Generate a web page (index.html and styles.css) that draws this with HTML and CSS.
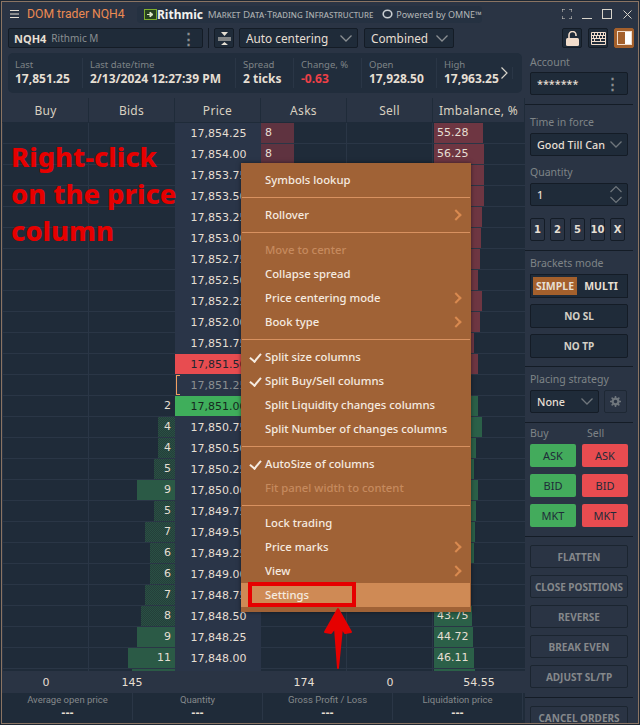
FILE: index.html
```html
<!DOCTYPE html>
<html lang="en">

<head>
    <meta charset="UTF-8">
    <title>DOM trader NQH4</title>
    <link rel="stylesheet" href="styles.css">
</head>

<body>
    <div class="window">
        <div class="titlebar">
            <svg class="burger" width="9" height="8" viewBox="0 0 9 8"><path d="M0 .5h9M0 4h9M0 7.5h9" stroke="#e6dfd3" stroke-width="1"/></svg>
            <span class="title">DOM trader NQH4</span>
            <div class="brand">
                <svg width="13" height="11" viewBox="0 0 13 11"><rect x=".5" y=".5" width="12" height="10" fill="#26401f" stroke="#7fae2e"/><path d="M3 5.5h5M6 3l3 2.5L6 8z" fill="#dfe8c8" stroke="#dfe8c8"/></svg>
                <span class="brand-name">Rithmic</span>
                <span class="brand-tag">Market Data·Trading Infrastructure</span>
                <svg class="omne-ring" width="11" height="10" viewBox="0 0 11 10"><ellipse cx="5.5" cy="5" rx="4.3" ry="3.8" fill="none" stroke="#c9ced2" stroke-width="1.6"/></svg>
                <span class="brand-omne">Powered by OMNE™</span>
            </div>
            <div class="win-buttons">
                <svg width="10" height="10" viewBox="0 0 10 10"><path d="M0 3V0h3M7 0h3v3M10 7v3H7M3 10H0V7" fill="none" stroke="#d8d4ca"/></svg>
                <svg width="10" height="10" viewBox="0 0 10 10"><path d="M0 9.5h10" stroke="#d8d4ca"/></svg>
                <svg width="10" height="10" viewBox="0 0 10 10"><rect x=".5" y=".5" width="9" height="9" fill="none" stroke="#d8d4ca"/></svg>
                <svg width="9" height="9" viewBox="0 0 9 9"><path d="M.5.5l8 8M8.5.5l-8 8" stroke="#d8d4ca"/></svg>
            </div>
        </div>

        <div class="toolbar">
            <div class="field symbol">
                <b>NQH4</b><span class="muted">Rithmic M</span>
                <span class="dots">⋮</span>
            </div>
            <span class="tool-sep"></span>
            <div class="field icon-btn">
                <svg width="13" height="13" viewBox="0 0 13 13"><path d="M0 6h13M0 8h13" stroke="#e6dfd3"/><path d="M3 0h7L6.500 4zM3 13h7L6.500 10z" fill="#e6dfd3"/></svg>
            </div>
            <div class="field select auto">Auto centering<svg class="caret" width="12" height="7" viewBox="0 0 12 7"><path d="M.5.500l5.500 5.500L11.500.500" fill="none" stroke="#8a8f92" stroke-width="1.300"/></svg></div>
            <div class="field select combined">Combined<svg class="caret" width="12" height="7" viewBox="0 0 12 7"><path d="M.5.500l5.500 5.500L11.500.500" fill="none" stroke="#8a8f92" stroke-width="1.300"/></svg></div>
            <div class="tool-right">
                <div class="field icon-btn">
                    <svg width="13" height="15" viewBox="0 0 13 15"><path d="M3 7V4a3.500 3.500 0 0 1 7 0v1" fill="none" stroke="#f1dccb" stroke-width="1.600"/><rect y="7" width="13" height="8" rx="1.500" fill="#f1dccb"/></svg>
                </div>
                <div class="field icon-btn">
                    <svg width="15" height="13" viewBox="0 0 15 13"><path d="M.5.500h14v12H.5zM.5 3.500h14M.5 6.500h14M.5 9.500h14M3.500.5v3M6.500.5v3M9.500.5v3M12.500.5v3M2.500 3.500v3M5.500 3.500v3M8.500 3.500v3M11.500 3.500v3M3.500 6.500v3M9.500 6.500v3" fill="none" stroke="#f1dccb"/></svg>
                </div>
                <div class="field icon-btn active">
                    <svg width="15" height="14" viewBox="0 0 15 14"><rect x=".5" y=".5" width="14" height="13" fill="#a4602c" stroke="#f1dccb"/><rect x="8" y="1" width="6" height="12" fill="#fff"/></svg>
                </div>
            </div>
        </div>

        <div class="main">
            <div class="left">
                <div class="stats">
                    <div class="stat s-last"><span>Last</span><b>17,851.25</b></div>
                    <div class="stat s-date"><span>Last date/time</span><b>2/13/2024 12:27:39 PM</b></div>
                    <div class="stat s-spread"><span>Spread</span><b>2 ticks</b></div>
                    <div class="stat s-change"><span>Change, %</span><b class="down">-0.63</b></div>
                    <div class="stat s-open"><span>Open</span><b>17,928.50</b></div>
                    <div class="stat s-high"><span>High</span><b>17,963.25</b></div>
                    <div class="stat-more">
                        <svg width="7" height="12" viewBox="0 0 7 12"><path d="M.5.500L6 6 .5 11.500" fill="none" stroke="#d8d4ca" stroke-width="1.200"/></svg>
                    </div>
                </div>

                <div class="head">
                    <div>Buy</div>
                    <div>Bids</div>
                    <div>Price</div>
                    <div>Asks</div>
                    <div>Sell</div>
                    <div>Imbalance, %</div>
                </div>

                <div class="rows">
                    <div class="row"><div class="cell"></div><div class="cell bids"></div><div class="cell price">17,854.25</div><div class="cell asks"><span class="bar ask" style="width:33px">8</span></div><div class="cell"></div><div class="cell imb"><span class="bar red" style="width:49px">55.28</span></div></div>
                    <div class="row"><div class="cell"></div><div class="cell bids"></div><div class="cell price">17,854.00</div><div class="cell asks"><span class="bar ask" style="width:33px">8</span></div><div class="cell"></div><div class="cell imb"><span class="bar red" style="width:50px">56.25</span></div></div>
                    <div class="row"><div class="cell"></div><div class="cell bids"></div><div class="cell price">17,853.75</div><div class="cell"></div><div class="cell"></div><div class="cell imb"><span class="bar red" style="width:50px"></span></div></div>
                    <div class="row"><div class="cell"></div><div class="cell bids"></div><div class="cell price">17,853.50</div><div class="cell"></div><div class="cell"></div><div class="cell imb"><span class="bar red" style="width:50px"></span></div></div>
                    <div class="row"><div class="cell"></div><div class="cell bids"></div><div class="cell price">17,853.25</div><div class="cell"></div><div class="cell"></div><div class="cell imb"><span class="bar red" style="width:48px"></span></div></div>
                    <div class="row"><div class="cell"></div><div class="cell bids"></div><div class="cell price">17,853.00</div><div class="cell"></div><div class="cell"></div><div class="cell imb"><span class="bar red" style="width:47px"></span></div></div>
                    <div class="row"><div class="cell"></div><div class="cell bids"></div><div class="cell price">17,852.75</div><div class="cell"></div><div class="cell"></div><div class="cell imb"><span class="bar red" style="width:46px"></span></div></div>
                    <div class="row"><div class="cell"></div><div class="cell bids"></div><div class="cell price">17,852.50</div><div class="cell"></div><div class="cell"></div><div class="cell imb"><span class="bar red" style="width:44px"></span></div></div>
                    <div class="row"><div class="cell"></div><div class="cell bids"></div><div class="cell price">17,852.25</div><div class="cell"></div><div class="cell"></div><div class="cell imb"><span class="bar red" style="width:48px"></span></div></div>
                    <div class="row"><div class="cell"></div><div class="cell bids"></div><div class="cell price">17,852.00</div><div class="cell"></div><div class="cell"></div><div class="cell imb"><span class="bar red" style="width:46px"></span></div></div>
                    <div class="row"><div class="cell"></div><div class="cell bids"></div><div class="cell price">17,851.75</div><div class="cell"></div><div class="cell"></div><div class="cell imb"><span class="bar red" style="width:40px"></span></div></div>
                    <div class="row"><div class="cell"></div><div class="cell bids"></div><div class="cell price best-ask">17,851.50</div><div class="cell"></div><div class="cell"></div><div class="cell imb"><span class="bar red" style="width:44px"></span></div></div>
                    <div class="row"><div class="cell"></div><div class="cell bids"></div><div class="cell price last">17,851.25</div><div class="cell"></div><div class="cell"></div><div class="cell imb"></div></div>
                    <div class="row"><div class="cell"></div><div class="cell bids"><span class="bar">2</span></div><div class="cell price best-bid">17,851.00</div><div class="cell"></div><div class="cell"></div><div class="cell imb"><span class="bar green" style="width:44px"></span></div></div>
                    <div class="row"><div class="cell"></div><div class="cell bids"><span class="bar dim" style="width:17px">4</span></div><div class="cell price">17,850.75</div><div class="cell"></div><div class="cell"></div><div class="cell imb"><span class="bar green" style="width:48px"></span></div></div>
                    <div class="row"><div class="cell"></div><div class="cell bids"><span class="bar dim" style="width:17px">4</span></div><div class="cell price">17,850.50</div><div class="cell"></div><div class="cell"></div><div class="cell imb"><span class="bar green" style="width:42px"></span></div></div>
                    <div class="row"><div class="cell"></div><div class="cell bids"><span class="bar dim" style="width:21px">5</span></div><div class="cell price">17,850.25</div><div class="cell"></div><div class="cell"></div><div class="cell imb"><span class="bar green" style="width:40px"></span></div></div>
                    <div class="row"><div class="cell"></div><div class="cell bids"><span class="bar" style="width:38px">9</span></div><div class="cell price">17,850.00</div><div class="cell"></div><div class="cell"></div><div class="cell imb"><span class="bar green" style="width:44px"></span></div></div>
                    <div class="row"><div class="cell"></div><div class="cell bids"><span class="bar dim" style="width:21px">5</span></div><div class="cell price">17,849.75</div><div class="cell"></div><div class="cell"></div><div class="cell imb"><span class="bar green" style="width:42px"></span></div></div>
                    <div class="row"><div class="cell"></div><div class="cell bids"><span class="bar dim" style="width:30px">7</span></div><div class="cell price">17,849.50</div><div class="cell"></div><div class="cell"></div><div class="cell imb"><span class="bar green" style="width:41px"></span></div></div>
                    <div class="row"><div class="cell"></div><div class="cell bids"><span class="bar dim" style="width:25px">6</span></div><div class="cell price">17,849.25</div><div class="cell"></div><div class="cell"></div><div class="cell imb"><span class="bar green" style="width:40px"></span></div></div>
                    <div class="row"><div class="cell"></div><div class="cell bids"><span class="bar dim" style="width:25px">6</span></div><div class="cell price">17,849.00</div><div class="cell"></div><div class="cell"></div><div class="cell imb"></div></div>
                    <div class="row"><div class="cell"></div><div class="cell bids"><span class="bar dim" style="width:30px">7</span></div><div class="cell price">17,848.75</div><div class="cell"></div><div class="cell"></div><div class="cell imb"></div></div>
                    <div class="row"><div class="cell"></div><div class="cell bids"><span class="bar dim" style="width:34px">8</span></div><div class="cell price">17,848.50</div><div class="cell"></div><div class="cell"></div><div class="cell imb"><span class="bar green" style="width:38px">43.75</span></div></div>
                    <div class="row"><div class="cell"></div><div class="cell bids"><span class="bar" style="width:38px">9</span></div><div class="cell price">17,848.25</div><div class="cell"></div><div class="cell"></div><div class="cell imb"><span class="bar green" style="width:39px">44.72</span></div></div>
                    <div class="row"><div class="cell"></div><div class="cell bids"><span class="bar" style="width:47px">11</span></div><div class="cell price">17,848.00</div><div class="cell"></div><div class="cell"></div><div class="cell imb"><span class="bar green" style="width:40px">46.11</span></div></div>
                    <div class="row"><div class="cell"></div><div class="cell bids"><span class="bar" style="width:43px"></span></div><div class="cell price"></div><div class="cell"></div><div class="cell"></div><div class="cell imb"><span class="bar green" style="width:41px"></span></div></div>
                </div>

                <div class="totals">
                    <div>0</div>
                    <div>145</div>
                    <div></div>
                    <div>174</div>
                    <div>0</div>
                    <div>54.55</div>
                </div>

                <div class="info">
                    <div><span>Average open price</span><b>---</b></div>
                    <div><span>Quantity</span><b>---</b></div>
                    <div><span>Gross Profit / Loss</span><b>---</b></div>
                    <div><span>Liquidation price</span><b>---</b></div>
                </div>
            </div>

            <div class="side">
                <div class="section sec-account">
                    <label>Account</label>
                    <div class="field ctl">*******<span class="dots">⋮</span></div>
                </div>
                <div class="section sec-order">
                    <label>Time in force</label>
                    <div class="field ctl">Good Till Can<svg class="caret" width="12" height="7" viewBox="0 0 12 7"><path d="M.5.500l5.500 5.500L11.500.500" fill="none" stroke="#6f767c" stroke-width="1.300"/></svg></div>
                    <label class="next">Quantity</label>
                    <div class="field ctl">1
                        <svg class="caret" width="12" height="19" viewBox="0 0 12 19"><path d="M.5 7L6 1.500 11.500 7M.5 12L6 17.500 11.500 12" fill="none" stroke="#6f767c" stroke-width="1.200"/></svg>
                    </div>
                    <div class="qty">
                        <div>1</div>
                        <div>2</div>
                        <div>5</div>
                        <div>10</div>
                        <div>X</div>
                    </div>
                </div>
                <div class="section sec-brackets">
                    <label>Brackets mode</label>
                    <div class="toggle"><span class="on">SIMPLE</span><span>MULTI</span></div>
                    <div class="btn light">NO SL</div>
                    <div class="btn light">NO TP</div>
                </div>
                <div class="section sec-strategy">
                    <label>Placing strategy</label>
                    <div class="strategy">
                        <div class="field ctl">None<svg class="caret" width="12" height="7" viewBox="0 0 12 7"><path d="M.5.500l5.500 5.500L11.500.500" fill="none" stroke="#6f767c" stroke-width="1.300"/></svg></div>
                        <div class="gear">
                            <svg width="11" height="11" viewBox="0 0 11 11"><circle cx="5.500" cy="5.500" r="2.900" fill="none" stroke="#6f767c" stroke-width="2.200"/><path d="M5.500 0v11M0 5.500h11M1.600 1.600l7.800 7.800M9.400 1.600L1.600 9.400" stroke="#6f767c" stroke-width="1.500" stroke-dasharray="2 7"/></svg>
                        </div>
                    </div>
                </div>
                <div class="section sec-trade">
                    <div class="trade-labels"><label>Buy</label><label>Sell</label></div>
                    <div class="trade">
                        <div class="buy">ASK</div>
                        <div class="sell">ASK</div>
                        <div class="buy">BID</div>
                        <div class="sell">BID</div>
                        <div class="buy">MKT</div>
                        <div class="sell">MKT</div>
                    </div>
                </div>
                <div class="section sec-actions">
                    <div class="btn">FLATTEN</div>
                    <div class="btn">CLOSE POSITIONS</div>
                    <div class="btn">REVERSE</div>
                    <div class="btn">BREAK EVEN</div>
                    <div class="btn">ADJUST SL/TP</div>
                </div>
                <div class="section sec-cancel">
                    <div class="btn">CANCEL ORDERS</div>
                </div>
            </div>
        </div>
    </div>

    <div class="note">Right-click<br>on the price<br>column</div>

    <div class="menu">
        <div class="item">Symbols lookup</div>
        <div class="sep"></div>
        <div class="item more">Rollover</div>
        <div class="sep"></div>
        <div class="item off">Move to center</div>
        <div class="item">Collapse spread</div>
        <div class="item more">Price centering mode</div>
        <div class="item more">Book type</div>
        <div class="sep"></div>
        <div class="item check">Split size columns</div>
        <div class="item check">Split Buy/Sell columns</div>
        <div class="item">Split Liquidity changes columns</div>
        <div class="item">Split Number of changes columns</div>
        <div class="sep"></div>
        <div class="item check">AutoSize of columns</div>
        <div class="item off">Fit panel width to content</div>
        <div class="sep"></div>
        <div class="item">Lock trading</div>
        <div class="item more">Price marks</div>
        <div class="item more">View</div>
        <div class="item hover">Settings</div>
    </div>

    <div class="red-box"></div>
    <svg class="arrow" width="32" height="66" viewBox="0 0 32 66">
        <path d="M16 3L29 26 23 27 20 22 16 62 13 22 9 27 3 26z" fill="#e60000" stroke="#e60000" stroke-width="2" stroke-linejoin="round"/>
    </svg>
</body>

</html>
```

FILE: styles.css
```css
* {
    box-sizing: border-box;
}

body {
    margin: 0;
    width: 640px;
    height: 725px;
    padding: 1px;
    background-color: #1d2733;
    font-family: 'Noto Sans', Arial, sans-serif;
    font-size: 12px;
    color: #e6dfd3;
    overflow: hidden;
}

svg {
    display: block;
    flex-shrink: 0;
}

.window {
    display: flex;
    flex-direction: column;
    height: 723px;
    border: 1px solid #8a7463;
    background-color: #2a3444;
}

/* title bar */
.titlebar {
    display: flex;
    align-items: center;
    height: 24px;
    flex-shrink: 0;
    padding-left: 8px;
}

.title {
    flex-shrink: 0;
    width: 110px;
    margin-left: 8px;
    font-family: Roboto, sans-serif;
    font-size: 12.200px;
    color: #ec8a52;
    white-space: nowrap;
}

.brand {
    display: flex;
    align-items: center;
    flex-shrink: 0;
    width: 345px;
    height: 17px;
    padding-left: 7px;
    border-radius: 4px;
    background-color: #253141;
    white-space: nowrap;
}

.brand-name {
    width: 51px;
    font-size: 12px;
    font-weight: bold;
    color: #f2f2ee;
}

.brand-tag {
    width: 176px;
    font-size: 9.800px;
    font-variant: small-caps;
    color: #a9adae;
}

.omne-ring {
    margin-right: 3px;
}

.brand-omne {
    font-size: 9px;
    color: #b3b6b7;
}

.win-buttons {
    display: flex;
    align-items: center;
    gap: 10px;
    margin-left: 80px;
}

.win-buttons svg:last-child {
    margin-left: 1px;
}

/* toolbar */
.toolbar {
    display: flex;
    align-items: center;
    height: 24px;
    flex-shrink: 0;
    padding-left: 6px;
}

.field {
    display: flex;
    align-items: center;
    height: 20px;
    border: 1px solid #141c26;
    border-radius: 2px;
    background-color: #1f2b39;
    white-space: nowrap;
}

.symbol {
    width: 195px;
    padding-left: 5px;
    font-size: 11px;
}

.symbol .muted {
    margin-left: 5px;
    font-size: 10px;
    color: #8b8f91;
}

.dots {
    margin-left: auto;
    margin-right: 6px;
    font-size: 15px;
    font-weight: bold;
    line-height: 1;
    color: #8b8f91;
}

.tool-sep {
    width: 1px;
    height: 20px;
    margin: 0 5px;
    background-color: #141c26;
}

.icon-btn {
    justify-content: center;
    width: 20px;
}

.select {
    padding-left: 6px;
    font-size: 11.800px;
}

.caret {
    margin-left: auto;
    margin-right: 5px;
}

.auto {
    width: 119px;
    margin-left: 5px;
}

.combined {
    width: 90px;
    margin-left: 6px;
}

.tool-right {
    display: flex;
    gap: 6px;
    margin-left: 108px;
}

.active {
    background-color: #a4602c;
    border-color: #a4602c;
}

/* main area */
.main {
    display: flex;
    flex: 1;
    min-height: 0;
}

.left {
    display: flex;
    flex-direction: column;
    width: 523px;
    flex-shrink: 0;
}

.stats {
    display: flex;
    align-items: center;
    height: 40px;
    flex-shrink: 0;
    margin: 3px 3px 5px 6px;
    border-radius: 5px;
    background-color: #212d3c;
    overflow: hidden;
}

.stat {
    display: flex;
    flex-direction: column;
    height: 30px;
    padding-left: 7px;
    border-right: 1px solid #2a3646;
    white-space: nowrap;
}

.stat span {
    font-size: 9.500px;
    line-height: 14px;
    color: #7f8487;
}

.stat b {
    font-size: 12px;
    line-height: 14px;
}

.stat .down {
    color: #ee4047;
}

.s-last { width: 75px; }
.s-date { width: 153px; }
.s-spread { width: 58px; }
.s-change { width: 68px; }
.s-open { width: 75px; }
.s-high { width: 63px; border-right: none; }

.stat-more {
    width: 13px;
    padding-left: 1px;
    border-right: 1px solid #2a3646;
}

/* ladder */
.head,
.row,
.totals {
    display: grid;
    grid-template-columns: repeat(5, 86px) 1fr;
    padding-left: 1px;
}

.head {
    height: 25px;
    flex-shrink: 0;
    border-bottom: 1px solid #1f2b39;
    font-size: 12px;
    letter-spacing: .3px;
    color: #d8d0c0;
}

.head div {
    display: flex;
    align-items: center;
    justify-content: center;
    border-right: 1px solid #1f2b39;
}

.rows {
    flex: 1;
    min-height: 0;
    overflow: hidden;
}

.row {
    height: 21px;
}

.cell {
    display: flex;
    height: 21px;
    border-right: 1px solid #2a3646;
    border-bottom: 1px solid #2a3646;
    background-color: #1f2b39;
    font-family: 'DejaVu Sans', sans-serif;
    font-size: 11px;
}

.bids {
    justify-content: flex-end;
    border-right: none;
}

.price {
    align-items: center;
    justify-content: center;
    padding-left: 1px;
    border-right: none;
    border-bottom-color: #2a3548;
    background-color: #2a3548;
    background-clip: padding-box;
}

.best-ask {
    background-color: #e84c50;
    color: #22262e;
}

.best-bid {
    background-color: #3fae5b;
    color: #16281f;
}

.last {
    color: #8b8f91;
    background-image: linear-gradient(#f0a060, #f0a060), linear-gradient(#f0a060, #f0a060), linear-gradient(#f0a060, #f0a060);
    background-size: 1px 20px, 4px 1px, 4px 1px;
    background-position: 1px 0, 1px 0, 1px 19px;
    background-repeat: no-repeat;
}

.bar {
    display: block;
    height: 20px;
    line-height: 20px;
}

.bids .bar {
    padding-right: 4px;
    text-align: right;
    background-color: #2b5a46;
}

.bids .bar:not([style]) {
    background-color: transparent;
}

.bids .dim {
    background: repeating-conic-gradient(#2a5044 0 25%, #243f3a 0 50%) 0 0 / 2px 2px;
}

.ask {
    padding-left: 4px;
    background-color: #5f3340;
}

.imb .bar {
    padding-left: 3px;
}

.red {
    background-color: #6e3642;
}

.green {
    background-color: #2b6048;
}

.imb {
    padding-left: 1px;
    border-right: none;
}

.totals {
    height: 22px;
    flex-shrink: 0;
    align-items: center;
    text-align: center;
    font-family: 'DejaVu Sans', sans-serif;
    font-size: 11px;
}

.info {
    display: grid;
    grid-template-columns: repeat(4, 130px);
    height: 30px;
    flex-shrink: 0;
    padding-left: 1px;
    padding-bottom: 3px;
    background-color: #1f2b39;
    text-align: center;
}

.info div {
    display: flex;
    flex-direction: column;
    border-right: 1px solid #2a3646;
}

.info span {
    font-family: Roboto, sans-serif;
    font-size: 9.500px;
    line-height: 14px;
    color: #85898b;
}

.info b {
    font-family: 'DejaVu Sans', sans-serif;
    font-size: 10px;
    line-height: 11px;
}

/* right side panel */
.side {
    width: 113px;
    padding-right: 5px;
    overflow: hidden;
}

.section {
    padding: 5px 5px 9px;
    border-bottom: 1px solid #141c26;
}

.section label {
    display: block;
    height: 14px;
    margin-bottom: 3px;
    font-size: 10.500px;
    line-height: 14px;
    color: #7f8487;
}

.ctl {
    height: 23px;
    padding-left: 6px;
    font-size: 10.800px;
    font-weight: 500;
}

.ctl .dots {
    margin-right: 7px;
}

.sec-order {
    padding-top: 10px;
}

.sec-order label {
    margin-bottom: 4px;
}

.sec-order .next {
    margin-top: 9px;
}

.qty {
    display: flex;
    gap: 5px;
    margin-top: 12px;
}

.qty div {
    display: flex;
    align-items: center;
    justify-content: center;
    width: 15px;
    height: 23px;
    border: 1px solid #141c26;
    border-radius: 2px;
    font-family: 'DejaVu Sans', sans-serif;
    font-size: 10px;
    font-weight: bold;
}

.sec-brackets {
    padding-bottom: 8px;
}

.sec-brackets label,
.sec-strategy label,
.sec-trade label {
    margin-bottom: 4px;
}

.toggle {
    display: flex;
    align-items: center;
    height: 24px;
    padding: 0 2px;
    border: 1px solid #141c26;
    background-color: #1f2b39;
    font-size: 10.500px;
    font-weight: bold;
}

.toggle span {
    flex: 1;
    text-align: center;
    line-height: 18px;
}

.toggle .on {
    flex: none;
    width: 44px;
    background-color: #a4602c;
}

.btn {
    display: flex;
    align-items: center;
    justify-content: center;
    height: 23px;
    margin-top: 7px;
    border: 1px solid #1b2530;
    border-radius: 2px;
    font-size: 10px;
    font-weight: bold;
    color: #85888b;
    white-space: nowrap;
}

.btn.light {
    height: 24px;
    margin-top: 6px;
    background-color: #1f2b39;
    border-color: #141c26;
    color: #d4d0c6;
}

.strategy {
    display: flex;
    gap: 5px;
}

.strategy .ctl {
    width: 69px;
}

.gear {
    display: flex;
    align-items: center;
    justify-content: center;
    width: 23px;
    height: 23px;
    border: 1px solid #1e2834;
    border-radius: 2px;
}

.sec-trade {
    padding-top: 3px;
}

.trade-labels {
    display: grid;
    grid-template-columns: 57px 1fr;
}

.trade {
    display: grid;
    grid-template-columns: 46px 46px;
    grid-auto-rows: 23px;
    gap: 7px 6px;
}

.trade div {
    display: flex;
    align-items: center;
    justify-content: center;
    border-radius: 2px;
    font-size: 11px;
    color: #1f2b39;
}

.trade .buy {
    background-color: #43ab5c;
}

.trade .sell {
    background-color: #e84c50;
}

.sec-actions {
    padding-top: 1px;
}

.sec-cancel {
    padding-top: 1px;
    border-bottom: none;
}

/* things laid over the window */
.note {
    position: absolute;
    left: 11px;
    top: 138px;
    font-size: 27.300px;
    font-weight: 800;
    line-height: 37px;
    color: #e60000;
    white-space: nowrap;
}

.menu {
    position: absolute;
    left: 241px;
    top: 163px;
    width: 230px;
    padding: 5px 0;
    background-color: #a06236;
    box-shadow: 0 0 4px rgba(0, 0, 0, 0.5);
    font-size: 11.300px;
    font-weight: 500;
    color: #f5ebe0;
}

.item {
    position: relative;
    height: 24px;
    padding-left: 24px;
    line-height: 24px;
}

.off {
    color: #c68a5e;
}

.hover {
    margin-right: 1px;
    background-color: #cf8a55;
}

.more::after {
    content: "";
    position: absolute;
    right: 11px;
    top: 8px;
    width: 6px;
    height: 6px;
    border-top: 2px solid #d98a50;
    border-right: 2px solid #d98a50;
    transform: rotate(45deg);
}

.check::before {
    content: "";
    position: absolute;
    left: 11px;
    top: 6px;
    width: 5px;
    height: 9px;
    border-right: 2px solid #f5ebe0;
    border-bottom: 2px solid #f5ebe0;
    transform: rotate(40deg);
}

.sep {
    height: 1px;
    margin: 5px 1px;
    background-color: #d89160;
}

.red-box {
    position: absolute;
    left: 248px;
    top: 582px;
    width: 108px;
    height: 25px;
    border: 4px solid #e60000;
}

.arrow {
    position: absolute;
    left: 322px;
    top: 606px;
}
```
